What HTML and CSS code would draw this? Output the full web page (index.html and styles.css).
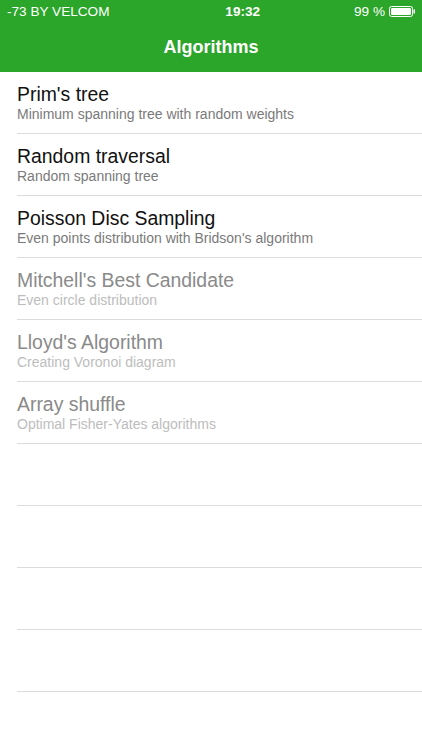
FILE: index.html
```html
<!DOCTYPE html>
<html lang="en">
<head>
    <meta charset="UTF-8">
    <meta name="viewport" content="width=device-width, initial-scale=1.0">
    <link rel="stylesheet" href="styles.css">
    <title>Algorithms</title>
</head>
<body>

    <header class="topbar">
        <div class="status">
            <span class="carrier">-73 BY VELCOM</span>
            <span class="clock">19:32</span>
            <span class="power">99 %
                <svg class="battery" width="27" height="11" viewBox="0 0 27 11">
                    <rect x="0.5" y="0.5" width="23" height="10" rx="2" fill="none" stroke="#fff" stroke-width="1"/>
                    <rect x="2" y="2" width="20" height="7" rx="1" fill="#fff"/>
                    <rect x="24.5" y="3.5" width="1.5" height="4" fill="#fff"/>
                </svg>
            </span>
        </div>
        <h1 class="title">Algorithms</h1>
    </header>

    <ul class="list">
        <li class="row">
            <div class="name">Prim's tree</div>
            <div class="desc">Minimum spanning tree with random weights</div>
        </li>
        <li class="row">
            <div class="name">Random traversal</div>
            <div class="desc">Random spanning tree</div>
        </li>
        <li class="row">
            <div class="name">Poisson Disc Sampling</div>
            <div class="desc">Even points distribution with Bridson's algorithm</div>
        </li>
        <li class="row disabled">
            <div class="name">Mitchell's Best Candidate</div>
            <div class="desc">Even circle distribution</div>
        </li>
        <li class="row disabled">
            <div class="name">Lloyd's Algorithm</div>
            <div class="desc">Creating Voronoi diagram</div>
        </li>
        <li class="row disabled">
            <div class="name">Array shuffle</div>
            <div class="desc">Optimal Fisher-Yates algorithms</div>
        </li>
        <li class="row empty"></li>
        <li class="row empty"></li>
        <li class="row empty"></li>
        <li class="row empty"></li>
    </ul>

</body>
</html>
```

FILE: styles.css
```css
body {
    margin: 0;
    font-family: 'Liberation Sans', Arial, sans-serif;
    background: #fff;
    color: #111;
}

/* barre verte du haut */
.topbar {
    background: #2ba52a;
    color: #fff;
    height: 72px;
}

.status {
    height: 22px;
    display: flex;
    align-items: center;
    justify-content: space-between;
    padding: 0 6px 0 7px;
    font-size: 13.6px;
}

.clock {
    font-weight: bold;
    margin-left: 22px;
}

.power {
    display: flex;
    align-items: center;
    gap: 4px;
}

.title {
    margin: 0;
    height: 50px;
    display: flex;
    align-items: center;
    justify-content: center;
    font-size: 18px;
    font-weight: bold;
}

/* liste des algorithmes */
.list {
    list-style: none;
    margin: 0;
    padding: 0 0 0 17px;
}

.row {
    height: 61px;
    border-bottom: 1px solid #dcdcdc;
    display: flex;
    flex-direction: column;
    justify-content: center;
}

.name {
    font-size: 19.4px;
    color: #111;
    line-height: 22px;
}

.desc {
    font-size: 14px;
    color: #7a7a7a;
    line-height: 18px;
}

.disabled .name {
    color: #8a8a8a;
}

.disabled .desc {
    color: #bdbdbd;
}
```
